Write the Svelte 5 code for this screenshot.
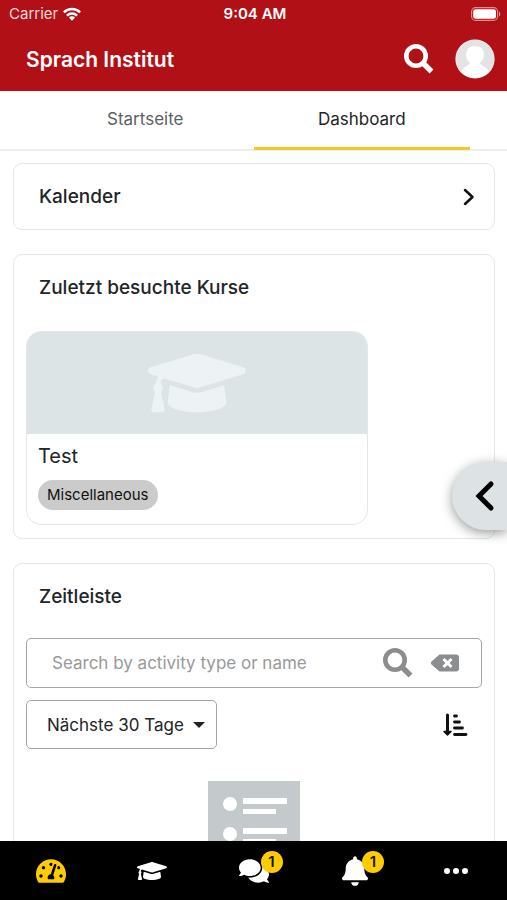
<script lang="ts">
    let activeTab = $state("Dashboard");
    let activeNav = $state("Dashboard");
    let search = $state("");

    const tabs = ["Startseite", "Dashboard"];

    const capPath = "M622.34 153.2L343.4 67.5c-15.2-4.67-31.6-4.67-46.79 0L17.66 153.2c-23.54 7.23-23.54 38.36 0 45.59l48.63 14.94c-10.67 13.19-17.23 29.28-17.88 46.9C38.78 266.15 32 276.11 32 288c0 10.78 5.68 19.85 13.86 25.65L20.33 428.53C18.11 438.52 25.71 448 35.94 448h56.11c10.24 0 17.84-9.48 15.62-19.47L82.14 313.65C90.32 307.85 96 298.78 96 288c0-11.57-6.47-21.25-15.66-26.87.76-15.02 8.44-28.3 20.69-36.72L296.6 284.5c9.06 2.78 26.44 6.25 46.79 0l278.95-85.7c23.55-7.24 23.55-38.36 0-45.6zM352.79 315.09c-28.53 8.76-52.84 3.92-65.59 0l-145.02-44.55L128 384c0 35.35 85.96 64 192 64s192-28.65 192-64l-14.18-113.47-145.03 44.56z";

    const navItems = [
        {
            label: "Dashboard",
            viewBox: "0 0 576 512",
            width: 30,
            path: "M288 32C128.94 32 0 160.94 0 320c0 52.8 14.25 102.26 39.06 144.8 5.61 9.62 16.3 15.2 27.44 15.2h443c11.14 0 21.83-5.58 27.44-15.2C561.75 422.26 576 372.8 576 320c0-159.06-128.94-288-288-288zm0 64c14.71 0 26.58 10.13 30.32 23.65-1.11 2.26-2.64 4.23-3.45 6.67l-9.22 27.67c-5.13 3.49-10.97 6.01-17.64 6.01-17.67 0-32-14.33-32-32S270.33 96 288 96zM96 384c-17.67 0-32-14.33-32-32s14.33-32 32-32 32 14.33 32 32-14.33 32-32 32zm48-160c-17.67 0-32-14.33-32-32s14.33-32 32-32 32 14.33 32 32-14.33 32-32 32zm246.77-72.41l-61.33 184C343.13 347.33 352 364.54 352 384c0 11.72-3.38 22.55-8.88 32H232.88c-5.5-9.45-8.88-20.28-8.88-32 0-33.94 26.5-61.43 59.9-63.59l61.34-184.01c4.17-12.56 17.73-19.45 30.36-15.17 12.57 4.19 19.35 17.79 15.17 30.36zm14.66 57.2l15.52-46.55c3.47-1.29 7.13-2.23 11.05-2.23 17.67 0 32 14.33 32 32s-14.33 32-32 32c-11.38-.01-20.89-6.28-26.57-15.22zM480 384c-17.67 0-32-14.33-32-32s14.33-32 32-32 32 14.33 32 32-14.33 32-32 32z"
        },
        { label: "Kurse", viewBox: "0 0 640 512", width: 30, path: capPath },
        {
            label: "Mitteilungen",
            viewBox: "0 0 576 512",
            width: 30,
            badge: 1,
            path: "M416 192c0-88.4-93.1-160-208-160S0 103.6 0 192c0 34.3 14.1 65.9 38 92-13.4 30.2-35.5 54.2-35.8 54.5-2.2 2.3-2.8 5.7-1.5 8.7S4.8 352 8 352c36.6 0 66.9-12.3 88.7-25 32.2 15.7 70.3 25 111.3 25 114.9 0 208-71.6 208-160zm122 220c23.9-26 38-57.7 38-92 0-66.9-53.5-124.2-129.3-148.1.9 6.6 1.3 13.3 1.3 20.1 0 105.9-107.7 192-240 192-10.8 0-21.3-.8-31.7-1.9C207.8 439.6 281.8 480 368 480c41 0 79.1-9.2 111.3-25 21.8 12.7 52.1 25 88.7 25 3.2 0 6.1-1.9 7.3-4.8 1.3-2.9.7-6.3-1.5-8.7-.3-.3-22.4-24.2-35.8-54.5z"
        },
        {
            label: "Systemnachrichten",
            viewBox: "0 0 448 512",
            width: 26,
            badge: 1,
            path: "M224 512c35.32 0 63.97-28.65 63.97-64H160.03c0 35.35 28.65 64 63.97 64zm215.39-149.71c-19.32-20.76-55.47-51.99-55.47-154.29 0-77.7-54.48-139.9-127.94-155.16V32c0-17.67-14.32-32-31.98-32s-31.98 14.33-31.98 32v20.84C118.56 68.1 64.08 130.3 64.08 208c0 102.3-36.15 133.53-55.47 154.29-6 6.45-8.66 14.16-8.61 21.71.11 16.4 12.98 32 32.1 32h383.8c19.12 0 32-15.6 32.1-32 .05-7.55-2.61-15.27-8.61-21.71z"
        },
        {
            label: "Mehr",
            viewBox: "0 0 26 26",
            width: 26,
            path: "M4 10a3 3 0 1 1 0 6a3 3 0 0 1 0-6zM13 10a3 3 0 1 1 0 6a3 3 0 0 1 0-6zM22 10a3 3 0 1 1 0 6a3 3 0 0 1 0-6z"
        }
    ];
</script>

{#snippet searchIcon()}
    <svg width="30" height="30" viewBox="0 0 30 30" fill="none" stroke="currentColor" aria-hidden="true">
        <circle cx="12" cy="12" r="9.7" stroke-width="4.6" />
        <path d="M19 19L27.5 27.5" stroke-width="5.4" />
    </svg>
{/snippet}

<div class="app">
    <header>
        <div class="status">
            <div class="carrier">
                <span>Carrier</span>
                <svg width="18" height="14" viewBox="0 0 18 14" fill="none" stroke="#fff" stroke-width="2.4" aria-hidden="true">
                    <path d="M0.9 5.3a11.6 11.6 0 0 1 16.2 0" />
                    <path d="M3.9 8.6a7.3 7.3 0 0 1 10.2 0" />
                    <path d="M9 13.8L5.9 10.6a4.4 4.4 0 0 1 6.2 0z" fill="#fff" stroke="none" />
                </svg>
            </div>
            <strong>9:04 AM</strong>
            <svg class="battery" width="30" height="14" viewBox="0 0 30 14" aria-hidden="true">
                <rect x="0.6" y="0.6" width="26" height="12.8" rx="4" fill="none" stroke="#e08d90" stroke-width="1.1" />
                <rect x="2.2" y="2.2" width="22.8" height="9.6" rx="2.4" fill="#fff" />
                <path d="M28 4.6a2.8 2.8 0 0 1 0 4.8z" fill="#e08d90" />
            </svg>
        </div>
        <div class="toolbar">
            <h1>Sprach Institut</h1>
            <button class="plain" aria-label="Suche">{@render searchIcon()}</button>
            <button class="plain" aria-label="Profil">
                <svg width="40" height="40" viewBox="0 0 40 40" aria-hidden="true">
                    <defs>
                        <clipPath id="avatar"><circle cx="20" cy="20" r="19" /></clipPath>
                    </defs>
                    <circle cx="20" cy="20" r="19.6" fill="#f6f6f6" />
                    <g clip-path="url(#avatar)">
                        <rect width="40" height="40" fill="#e3e3e3" />
                        <path d="M20 7c6 0 9 4 9 8.5c0 4-1.5 6.5-4 8.5c0 3 10 3 11 16H4c1-13 11-13 11-16c-2.500-2-4-4.500-4-8.500C11 11 14 7 20 7z" fill="#fff" />
                    </g>
                </svg>
            </button>
        </div>
    </header>

    <nav class="tabs">
        {#each tabs as tab}
            <button class:active={activeTab === tab} onclick={() => (activeTab = tab)}>{tab}</button>
        {/each}
    </nav>

    <main>
        <section class="card">
            <button class="card-head link">
                <h2>Kalender</h2>
                <svg width="12" height="18" viewBox="0 0 12 18" fill="none" stroke="#111" stroke-width="2.5" stroke-linecap="round" stroke-linejoin="round" aria-hidden="true">
                    <path d="M2 2l7.5 7L2 16" />
                </svg>
            </button>
        </section>

        <section class="card">
            <div class="card-head"><h2>Zuletzt besuchte Kurse</h2></div>
            <div class="card-body">
                <a class="course" href="#test">
                    <div class="course-image">
                        <svg width="98" height="78" viewBox="0 0 640 512" fill="#edf3f4" aria-hidden="true"><path d={capPath} /></svg>
                    </div>
                    <div class="course-info">
                        <h3>Test</h3>
                        <span class="chip">Miscellaneous</span>
                    </div>
                </a>
            </div>
        </section>

        <section class="card">
            <div class="card-head"><h2>Zeitleiste</h2></div>
            <div class="card-body timeline">
                <form class="search" onsubmit={(e) => e.preventDefault()}>
                    <input type="text" aria-label="Search by activity type or name" placeholder="Search by activity type or name" bind:value={search} />
                    <button class="plain" type="submit" aria-label="Suchen">{@render searchIcon()}</button>
                    <button class="plain" type="button" aria-label="Löschen" onclick={() => (search = "")}>
                        <svg width="30" height="18" viewBox="0 0 30 18" aria-hidden="true">
                            <path d="M9.5 0.5H26a3 3 0 0 1 3 3V14.5a3 3 0 0 1-3 3H9.5L1.5 10.5q-1.5-1.5 0-3z" fill="currentColor" />
                            <path d="M13.5 5l8 8M21.5 5l-8 8" stroke="#fff" stroke-width="3" />
                        </svg>
                    </button>
                </form>
                <div class="filters">
                    <div class="select">
                        <select aria-label="Zeitraum">
                            <option>Nächste 30 Tage</option>
                        </select>
                        <svg width="12" height="6" viewBox="0 0 12 6" fill="#222" aria-hidden="true"><path d="M0 0h12L6 6z" /></svg>
                    </div>
                    <button class="plain sort" aria-label="Sortieren">
                        <svg width="26" height="24" viewBox="0 0 26 24" fill="none" stroke="#111" stroke-linecap="round" aria-hidden="true">
                            <path d="M5.5 2V20" stroke-width="3" />
                            <path d="M2 18.5h7L5.5 22z" fill="#111" stroke-width="1.5" stroke-linejoin="round" />
                            <path d="M12.5 3h2M12.5 9h5M12.5 15h8M12.5 21.5h11.5" stroke-width="2.8" />
                        </svg>
                    </button>
                </div>
                <svg class="empty" width="92" height="120" viewBox="0 0 92 120" aria-hidden="true">
                    <rect width="92" height="120" fill="#c4c9cc" />
                    {#each [0, 30, 60] as y}
                        <circle cx="22" cy={y + 23} r="7" fill="#fff" />
                        <rect x="35" y={y + 17} width="44" height="6" fill="#fff" />
                        <rect x="35" y={y + 28} width="33" height="5" fill="#fff" />
                    {/each}
                </svg>
            </div>
        </section>
    </main>

    <button class="drawer" aria-label="Blöcke öffnen">
        <svg width="20" height="32" viewBox="0 0 20 32" fill="none" stroke="#000" stroke-width="5" stroke-linecap="round" aria-hidden="true">
            <path d="M16 4L4 16l12 12" />
        </svg>
    </button>

    <nav class="bottom">
        {#each navItems as item}
            <button class:active={activeNav === item.label} aria-label={item.label} onclick={() => (activeNav = item.label)}>
                <span class="icon">
                    <svg width={item.width} height="30" viewBox={item.viewBox} fill="currentColor" aria-hidden="true"><path d={item.path} /></svg>
                    {#if item.badge}
                        <span class="badge">{item.badge}</span>
                    {/if}
                </span>
            </button>
        {/each}
    </nav>
</div>

<style>
:global(body) {
    margin: 0;
}

.app {
    display: flex;
    flex-direction: column;
    height: 100vh;
    background: #fff;
    color: #222527;
    font-family: Inter, "Liberation Sans", sans-serif;
    font-size: 17px;
}

button {
    border: 0;
    padding: 0;
    background: none;
    color: inherit;
    font: inherit;
    cursor: pointer;
}

svg {
    display: block;
}

h1, h2, h3 {
    margin: 0;
}

.plain {
    display: flex;
    align-items: center;
}

header {
    background: #b11116;
    color: #fff;
}

.status {
    display: grid;
    grid-template-columns: 1fr auto 1fr;
    align-items: center;
    height: 27px;
    padding: 0 6px 0 9px;
    font-size: 15px;
}

.status strong {
    font-weight: 600;
}

.carrier {
    display: flex;
    align-items: center;
    gap: 5px;
    color: #f8dcdd;
}

.battery {
    justify-self: end;
}

.toolbar {
    display: flex;
    align-items: center;
    gap: 21px;
    height: 64px;
    padding: 0 12px 0 26px;
}

.toolbar h1 {
    flex: 1;
    font-size: 21px;
    font-weight: 600;
}

.tabs {
    display: flex;
    padding: 0 37px;
    border-bottom: 2px solid #eee;
}

.tabs button {
    flex: 1;
    height: 59px;
    margin-bottom: -1px;
    border-bottom: 3px solid transparent;
    color: #5c5f62;
}

.tabs .active {
    border-color: #f0c92e;
    color: #222527;
}

main {
    flex: 1;
    min-height: 0;
    overflow-y: auto;
    scrollbar-width: none;
    display: flex;
    flex-direction: column;
    gap: 24px;
    padding: 12px 12px 0 13px;
}

.card {
    flex-shrink: 0;
    border: 1px solid #e4e7e8;
    border-radius: 9px;
}

.card-head {
    display: flex;
    align-items: center;
    justify-content: space-between;
    box-sizing: border-box;
    width: 100%;
    height: 65px;
    padding: 0 19px 0 25px;
    text-align: left;
}

.card-head h2 {
    font-size: 19px;
    font-weight: 500;
}

.card-body {
    padding: 11px 12px 13px;
}

.timeline {
    padding-top: 9px;
}

.course {
    display: block;
    width: 75%;
    box-sizing: border-box;
    border: 1px solid #e4e7e8;
    border-radius: 15px;
    overflow: hidden;
    color: inherit;
    text-decoration: none;
}

.course-image {
    display: flex;
    align-items: center;
    justify-content: center;
    height: 102px;
    background: #dde4e6;
}

.course-info {
    padding: 8px 11px 14px;
}

.course h3 {
    margin-bottom: 10px;
    font-size: 20px;
    font-weight: 400;
    line-height: 28px;
}

.chip {
    display: block;
    width: fit-content;
    padding: 0 9px;
    border-radius: 15px;
    background: #cbcbcb;
    color: #111;
    font-size: 15px;
    line-height: 30px;
}

.search {
    display: flex;
    align-items: center;
    gap: 17px;
    height: 48px;
    margin-bottom: 12px;
    padding: 0 21px 0 25px;
    border: 1px solid #a3a6a8;
    border-radius: 5px;
    color: #8b8d8f;
}

.search input {
    flex: 1;
    min-width: 0;
    padding: 0;
    border: 0;
    outline: none;
    background: none;
    color: #222527;
    font: inherit;
}

.search input::placeholder {
    color: #999;
    opacity: 1;
}

.filters {
    display: flex;
    align-items: center;
    justify-content: space-between;
    padding-right: 14px;
}

.select {
    position: relative;
}

.select select {
    appearance: none;
    height: 49px;
    padding: 0 32px 0 20px;
    border: 1px solid #a3a6a8;
    border-radius: 5px;
    background: #fff;
    color: #222527;
    font: inherit;
}

.select svg {
    position: absolute;
    right: 12px;
    top: 22px;
    pointer-events: none;
}

.empty {
    margin: 32px auto 0;
}

.drawer {
    position: fixed;
    right: 0;
    top: 462px;
    display: flex;
    align-items: center;
    width: 55px;
    height: 68px;
    padding-left: 23px;
    border-radius: 34px 0 0 34px;
    background: #dde2e5;
    box-shadow: 0 3px 12px rgba(0, 0, 0, 0.4);
}

.bottom {
    display: flex;
    height: 59px;
    background: #000;
    color: #fff;
}

.bottom button {
    flex: 1;
    display: flex;
    align-items: center;
    justify-content: center;
}

.bottom .active {
    color: #fc0;
}

.icon {
    position: relative;
}

.badge {
    position: absolute;
    left: calc(50% + 7px);
    top: -5px;
    width: 22px;
    border-radius: 11px;
    background: #fc0;
    color: #111;
    font-size: 15px;
    font-weight: 600;
    line-height: 22px;
    text-align: center;
}
</style>
